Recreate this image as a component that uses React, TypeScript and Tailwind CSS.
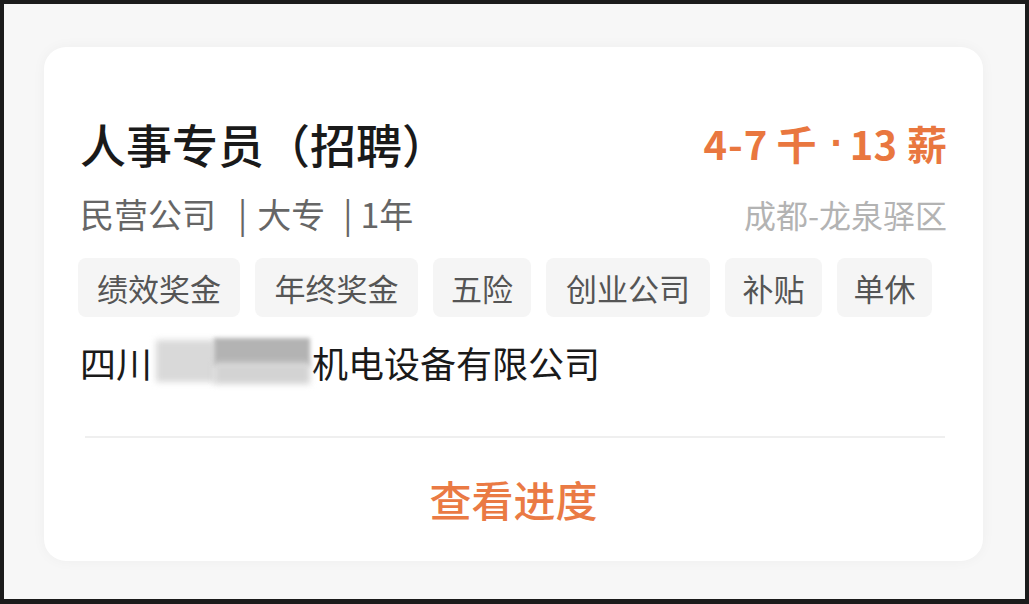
import React from "react";

const font = { fontFamily: '"Noto Sans CJK SC", "Noto Sans", sans-serif' };

const tags: { t: string; w: string }[] = [
  { t: "绩效奖金", w: "w-[162px]" },
  { t: "年终奖金", w: "w-[163px]" },
  { t: "五险", w: "w-[98px]" },
  { t: "创业公司", w: "w-[164px]" },
  { t: "补贴", w: "w-[97px]" },
  { t: "单休", w: "w-[95px]" },
];

export default function App() {
  return (
    <div
      className="w-[1029px] h-[604px] bg-[#1b1b1b] pt-[4px] pl-[4px] pr-[4px] pb-[5px] flex"
      style={font}
    >
      <div className="flex-1 bg-[#f7f7f7] pl-[40px] pt-[43px]">
        <div className="w-[939px] h-[514px] bg-white rounded-[22px] shadow-[0_0_14px_rgba(0,0,0,0.04)] pl-[36px] pr-[36px] pt-[73px] flex flex-col">
          <div className="flex items-center justify-between">
            <div className="text-[46px] leading-none font-medium text-[#1a1a1a]">
              人事专员（招聘）
            </div>
            <div className="text-[40px] leading-none font-semibold text-[#e9773f] flex items-center">
              <span className="tracking-[1px]">4-7</span>
              <span className="ml-[8px]">千</span>
              <span
                className="ml-[14px] mr-[6px]"
                style={{ fontFamily: '"Liberation Sans", sans-serif' }}
              >
                ·
              </span>
              <span>13</span>
              <span className="ml-[10px]">薪</span>
            </div>
          </div>
          <div className="flex items-center justify-between mt-[31px]">
            <div className="text-[34px] leading-none text-[#666666] flex items-center">
              <span>民营公司</span>
              <span className="ml-[22px] mr-[10px]">|</span>
              <span>大专</span>
              <span className="ml-[18px] mr-[8px]">|</span>
              <span>1年</span>
            </div>
            <div className="text-[32px] leading-none text-[#b3b3b3]">
              成都-龙泉驿区
            </div>
          </div>
          <div className="flex gap-[15px] mt-[27px] -ml-[2px]">
            {tags.map((g) => (
              <div
                key={g.t}
                className={`${g.w} h-[59px] rounded-[8px] bg-[#f5f5f5] flex items-center justify-center text-[31px] leading-none text-[#555555]`}
              >
                {g.t}
              </div>
            ))}
          </div>
          <div className="mt-[27px] flex items-center text-[36px] leading-none text-[#1a1a1a]">
            <span>四川</span>
            <span className="relative w-[160px] h-[36px] inline-block">
              <span className="absolute left-[4px] top-[-4px] w-[60px] h-[42px] bg-[#d9d9d9] blur-[3px]" />
              <span className="absolute left-[62px] top-[-6px] w-[96px] h-[28px] bg-[#b3b3b3] blur-[2px]" />
              <span className="absolute left-[62px] top-[18px] w-[96px] h-[22px] bg-[#d3d3d3] blur-[3px]" />
            </span>
            <span>机电设备有限公司</span>
          </div>
          <div className="mt-[56px] ml-[5px] mr-[2px] h-[2px] bg-[#efefef]" />
          <div className="mt-[40px] flex justify-center text-[42px] leading-none font-medium text-[#ea7a44]">
            查看进度
          </div>
        </div>
      </div>
    </div>
  );
}
